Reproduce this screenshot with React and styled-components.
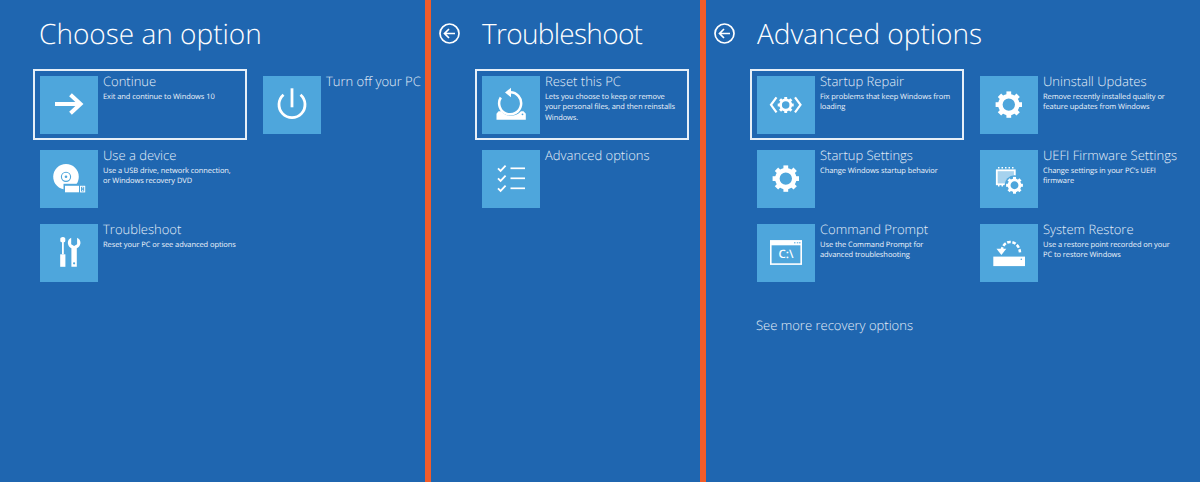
import React from 'react';
import styled, { createGlobalStyle } from 'styled-components';

const BLUE = '#1f66b0';
const TILE = '#4ea6dc';
const FONT = '"Open Sans", "Liberation Sans", sans-serif';

const GlobalStyle = createGlobalStyle`
    html, body {
        margin: 0;
        padding: 0;
        background: ${BLUE};
        text-rendering: geometricPrecision;
    }
`;

const Page = styled.div`
    display: grid;
    grid-template-columns: 425px 269px 494px;
    column-gap: 6px;
    width: 1200px;
    height: 482px;
    background: #f25c29;
    font-family: ${FONT};
    color: #fff;
    overflow: hidden;
`;

const Panel = styled.section`
    background: ${BLUE};
    height: 482px;
    overflow: hidden;
`;

const Header = styled.header`
    display: flex;
    align-items: center;
    gap: 22px;
    height: 69px;
    padding-left: ${p => (p.$back ? '8px' : '39px')};
    padding-bottom: 2px;
    box-sizing: border-box;
`;

const BackButton = styled.div`
    display: flex;
    width: 21px;
    height: 21px;
`;

const Title = styled.h1`
    margin: 0;
    font-size: 28px;
    font-weight: 300;
    letter-spacing: ${p => (p.$tight ? '-0.7px' : '0')};
    line-height: 34px;
    white-space: nowrap;
`;

const Grid = styled.div`
    display: grid;
    grid-template-columns: 214px 214px;
    grid-auto-flow: column;
    grid-template-rows: repeat(3, 71px);
    gap: 3px 9px;
    margin-left: ${p => (p.$back ? '44px' : '33px')};
`;

const Option = styled.div`
    display: flex;
    gap: 5px;
    box-sizing: border-box;
    width: 214px;
    height: 71px;
    padding: 5px;
    border: 2px solid ${p => (p.$selected ? '#e6eff8' : 'transparent')};
`;

const Tile = styled.div`
    flex: none;
    width: 58px;
    height: 58px;
    background: ${TILE};

    svg {
        display: block;
    }
`;

const OptionText = styled.div`
    min-width: 0;
    flex: 1;
`;

const OptionTitle = styled.div`
    font-size: 13px;
    font-weight: 300;
    line-height: 14px;
    color: #e4eef8;
    margin-top: -2px;
    white-space: nowrap;
`;

const OptionDesc = styled.div`
    font-size: 7.5px;
    letter-spacing: -0.08px;
    line-height: 10.5px;
    margin-top: 3.5px;
    max-width: 135px;
    color: #eef4fb;
`;

const MoreLink = styled.div`
    margin: 28px 0 0 50px;
    font-size: 13px;
    font-weight: 300;
    line-height: 18px;
    color: #e4eef8;
`;

const Icon = ({ children }) => (
    <svg width="58" height="58" viewBox="0 0.7 58 58" fill="none">{children}</svg>
);

// gear built from a ring and eight rotated teeth
const Gear = ({ cx, cy, r, halo }) => {
    const tooth = r * 0.36;
    return (
        <g transform={`translate(${cx} ${cy})`}>
            {halo && <circle r={r + 1.6} fill={TILE} />}
            <circle r={r * 0.64} stroke="#fff" strokeWidth={r * 0.34} />
            {[0, 45, 90, 135, 180, 225, 270, 315].map(a => (
                <rect key={a} x={-tooth / 2} y={-r} width={tooth} height={r * 0.45} fill="#fff" transform={`rotate(${a})`} />
            ))}
        </g>
    );
};

const BackIcon = () => (
    <svg width="21" height="21" viewBox="0 0 21 21" fill="none" stroke="#fff">
        <circle cx="10.5" cy="10.5" r="9.5" strokeWidth="1.7" />
        <path d="M16 10.5H5.5M10 6l-4.5 4.5L10 15" strokeWidth="1.7" />
    </svg>
);

const ArrowIcon = () => (
    <Icon>
        <path d="M15 28.7H41M30.5 19.5l10 9.2-10 9.2" stroke="#fff" strokeWidth="4" />
    </Icon>
);

const PowerIcon = () => (
    <Icon>
        <path d="M20.5 19.5a13 13 0 1 0 17 0" stroke="#fff" strokeWidth="2.8" />
        <path d="M29 13V32" stroke="#fff" strokeWidth="2.8" />
    </Icon>
);

const DeviceIcon = () => (
    <Icon>
        <circle cx="26" cy="27.5" r="12.8" fill="#fff" />
        <circle cx="26" cy="27.5" r="4.6" stroke={TILE} strokeWidth="1.1" />
        <circle cx="26" cy="27.5" r="1.3" fill={TILE} />
        <rect x="23.5" y="34.5" width="22.5" height="9.5" fill={TILE} />
        <rect x="25" y="36.5" width="14" height="6.5" fill="#fff" />
        <rect x="40.5" y="37" width="4.2" height="5.6" stroke="#fff" strokeWidth="1" />
        <path d="M42 38.5h1.3M42 41h1.3" stroke="#fff" strokeWidth="1" />
    </Icon>
);

const ToolsIcon = () => (
    <Icon>
        <rect x="22" y="14" width="1.8" height="17" fill="#fff" />
        <rect x="20.3" y="14" width="5" height="5" rx="1.5" fill="#fff" />
        <rect x="20.2" y="31" width="5.2" height="12.5" fill="#fff" />
        <path d="M31.2 14.5c-2.6 1.3-3.6 3.3-3.3 5.6.3 2.3 1.7 3.9 3.5 4.8V43.5h5.4V24.9c1.8-.9 3.3-2.5 3.6-4.8.3-2.3-.7-4.3-3.3-5.6V21l-3 1.6-2.9-1.6Z" fill="#fff" />
        <circle cx="34.1" cy="40" r="1.1" fill={TILE} />
    </Icon>
);

const ResetIcon = () => (
    <Icon>
        <path d="M14.5 44.5V38.5L16.5 36H41.5L43.8 38.5V44.5Z" fill="#fff" />
        <circle cx="29" cy="27.5" r="13" fill={TILE} />
        <path d="M28 17a11 11 0 1 1-9.2 5.2" stroke="#fff" strokeWidth="2.5" />
        <path d="M29 12.5L23 17.3l6 4.7Z" fill="#fff" />
        <circle cx="40.5" cy="39" r=".9" fill={TILE} />
    </Icon>
);

const ChecklistIcon = () => (
    <Icon>
        {[19, 29, 39].map(y => (
            <g key={y}>
                <path d={`M16 ${y}l2.6 2.6 5-5.2`} stroke="#fff" strokeWidth="1.8" />
                <path d={`M28.5 ${y}H43`} stroke="#fff" strokeWidth="1.7" />
            </g>
        ))}
    </Icon>
);

const RepairIcon = () => (
    <Icon>
        <path d="M19.5 22L14 29.5 19.5 37" stroke="#fff" strokeWidth="2.2" />
        <path d="M38 22L43.5 29.5 38 37" stroke="#fff" strokeWidth="2.2" />
        <Gear cx={28.7} cy={29.7} r={8} />
    </Icon>
);

const GearIcon = () => (
    <Icon>
        <Gear cx={28.8} cy={29.3} r={13.2} />
    </Icon>
);

const PromptIcon = () => (
    <Icon>
        <rect x="13.8" y="17.8" width="30.4" height="23" stroke="#fff" strokeWidth="1.6" />
        <rect x="13" y="17" width="32" height="5" fill="#fff" />
        <path d="M37 19.5h1.5M39.8 19.5h1.5M42 19.5h1.5" stroke={TILE} strokeWidth="1" />
        <text x="29" y="35" textAnchor="middle" fill="#fff" fontFamily={FONT} fontSize="11.5" fontWeight="600">C:\</text>
    </Icon>
);

const FirmwareIcon = () => (
    <Icon>
        <path d="M18 18.5H35M18 36.5H26" stroke="#fff" strokeWidth="1.5" strokeDasharray="1.5 2" />
        <rect x="16.8" y="21" width="18" height="14" stroke="#fff" strokeWidth="1.8" fill="#a6d2ee" />
        <Gear cx={34.5} cy={36} r={8.4} halo />
    </Icon>
);

const RestoreIcon = () => (
    <Icon>
        <rect x="13.3" y="33.3" width="31.7" height="9.5" fill="#fff" />
        <circle cx="41.3" cy="36" r=".8" fill={TILE} />
        <path d="M21.6 27.5C22.5 22 26 18.6 30 18.6c5.5 0 9.5 4.5 10 10.5" stroke="#fff" strokeWidth="2.5" strokeDasharray="3.6 1.6" />
        <path d="M16.5 25.5h9.8l-4.9 6.3Z" fill="#fff" />
    </Icon>
);

const choose = [
    { title: 'Continue', desc: 'Exit and continue to Windows 10', icon: <ArrowIcon />, selected: true },
    { title: 'Use a device', desc: 'Use a USB drive, network connection, or Windows recovery DVD', icon: <DeviceIcon /> },
    { title: 'Troubleshoot', desc: 'Reset your PC or see advanced options', icon: <ToolsIcon /> },
    { title: 'Turn off your PC', icon: <PowerIcon /> },
];

const troubleshoot = [
    { title: 'Reset this PC', desc: 'Lets you choose to keep or remove your personal files, and then reinstalls Windows.', icon: <ResetIcon />, selected: true },
    { title: 'Advanced options', icon: <ChecklistIcon /> },
];

const advanced = [
    { title: 'Startup Repair', desc: 'Fix problems that keep Windows from loading', icon: <RepairIcon />, selected: true },
    { title: 'Startup Settings', desc: 'Change Windows startup behavior', icon: <GearIcon /> },
    { title: 'Command Prompt', desc: 'Use the Command Prompt for advanced troubleshooting', icon: <PromptIcon /> },
    { title: 'Uninstall Updates', desc: 'Remove recently installed quality or feature updates from Windows', icon: <GearIcon /> },
    { title: 'UEFI Firmware Settings', desc: 'Change settings in your PC’s UEFI firmware', icon: <FirmwareIcon /> },
    { title: 'System Restore', desc: 'Use a restore point recorded on your PC to restore Windows', icon: <RestoreIcon /> },
];

const Options = ({ items, back }) => (
    <Grid $back={back}>
        {items.map(item => (
            <Option key={item.title} $selected={item.selected}>
                <Tile>{item.icon}</Tile>
                <OptionText>
                    <OptionTitle>{item.title}</OptionTitle>
                    {item.desc && <OptionDesc>{item.desc}</OptionDesc>}
                </OptionText>
            </Option>
        ))}
    </Grid>
);

const App = () => {
    return (
        <Page>
            <GlobalStyle />
            <Panel>
                <Header>
                    <Title>Choose an option</Title>
                </Header>
                <Options items={choose} />
            </Panel>
            <Panel>
                <Header $back>
                    <BackButton><BackIcon /></BackButton>
                    <Title $tight>Troubleshoot</Title>
                </Header>
                <Options items={troubleshoot} back />
            </Panel>
            <Panel>
                <Header $back>
                    <BackButton><BackIcon /></BackButton>
                    <Title>Advanced options</Title>
                </Header>
                <Options items={advanced} back />
                <MoreLink>See more recovery options</MoreLink>
            </Panel>
        </Page>
    );
};

export default App;
